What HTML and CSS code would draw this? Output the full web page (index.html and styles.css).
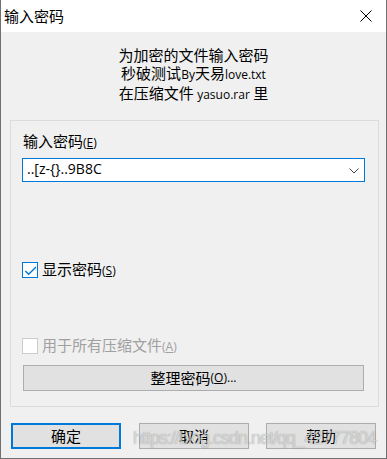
FILE: index.html
```html
<!DOCTYPE html>
<html lang="zh-CN">
<head>
<meta charset="utf-8">
<title>输入密码</title>
<link rel="stylesheet" href="styles.css">
</head>
<body>
<div class="win">
  <div class="titlebar">
    <span class="title">输入密码</span>
    <svg class="close" width="12" height="12" viewBox="0 0 12 12"><path d="M0.5 0.5 L11.5 11.5 M11.5 0.5 L0.5 11.5" stroke="#000" stroke-width="1" fill="none"/></svg>
  </div>
  <div class="body">
    <div class="msg">
      <div>为加密的文件输入密码</div>
      <div>秒破测试<span class="lat">By</span>天易<span class="lat">love.txt</span></div>
      <div>在压缩文件 <span class="lat">yasuo.rar</span> 里</div>
    </div>
    <div class="group">
      <div class="label">输入密码<span class="lat">(<u>E</u>)</span></div>
      <div class="combo">
        <span class="combo-text">..[z-{}..9B8C</span>
        <svg class="chev" width="10" height="6" viewBox="0 0 10 6"><path d="M0.5 0.5 L5 5 L9.5 0.5" stroke="#444" stroke-width="1" fill="none"/></svg>
      </div>
      <div class="check show">
        <span class="box checked"><svg width="14" height="14" viewBox="0 0 14 14"><path d="M2.3 8 L5.7 11.3 L13 4" stroke="#0078d7" stroke-width="1.4" fill="none"/></svg></span>
        <span>显示密码<span class="lat">(<u>S</u>)</span></span>
      </div>
      <div class="check disabled">
        <span class="box"></span>
        <span>用于所有压缩文件<span class="lat">(<u>A</u>)</span></span>
      </div>
      <div class="btn wide">整理密码<span class="lat">(<u>O</u>)...</span></div>
    </div>
    <div class="buttons">
      <div class="btn default">确定</div>
      <div class="btn b2">取消</div>
      <div class="btn b3">帮助</div>
    </div>
  </div>
  <div class="watermark">https://blog.csdn.net/qq_42777804</div>
</div>
</body>
</html>
```
FILE: styles.css
```css
html, body {
  margin: 0;
  padding: 0;
  background: #f0f0f0;
}
body {
  font-family: "Noto Sans CJK SC", "Noto Sans", sans-serif;
  font-size: 15px;
  line-height: 18px;
  color: #000;
}
.win {
  position: relative;
  width: 387px;
  height: 459px;
  box-sizing: border-box;
  border-left: 1px solid #707070;
  border-right: 1px solid #707070;
  border-bottom: 1px solid #707070;
  display: flex;
  flex-direction: column;
  overflow: hidden;
}
.titlebar {
  height: 32px;
  background: #fff;
  display: flex;
  align-items: center;
  padding-left: 3px;
  flex: none;
}
.title {
  line-height: 18px;
}
.close {
  margin-left: auto;
  margin-right: 14px;
}
.body {
  flex: 1;
  background: #f0f0f0;
  display: flex;
  flex-direction: column;
  padding-top: 14px;
}
.lat {
  font-family: "Open Sans", "Noto Sans", sans-serif;
  font-size: 12px;
}
.msg {
  text-align: center;
}
.group {
  margin-top: 16px;
  margin-left: 9px;
  width: 369px;
  height: 287px;
  box-sizing: border-box;
  border: 1px solid #dcdcdc;
  padding: 11px 0 0 11px;
  display: flex;
  flex-direction: column;
}
.label {
  margin-left: 1px;
}
.combo {
  margin-top: 6px;
  width: 343px;
  height: 24px;
  box-sizing: border-box;
  border: 1px solid #0078d7;
  background: #fff;
  display: flex;
  align-items: flex-start;
}
.combo-text {
  font-family: "Open Sans", "Noto Sans", sans-serif;
  font-size: 14px;
  line-height: 20px;
  padding-left: 4px;
}
.chev {
  margin-left: auto;
  margin-right: 5px;
  margin-top: 9px;
}
.check {
  display: flex;
  align-items: center;
  height: 18px;
  gap: 4px;
}
.check.show {
  margin-top: 79px;
}
.check.disabled {
  margin-top: 58px;
  color: #a0a0a0;
}
.box {
  width: 16px;
  height: 16px;
  box-sizing: border-box;
  border: 1px solid #cccccc;
  background: #fff;
  display: flex;
  align-items: center;
  justify-content: center;
}
.box.checked {
  border-color: #0078d7;
}
.btn {
  height: 26px;
  box-sizing: border-box;
  border: 1px solid #adadad;
  background: #e1e1e1;
  display: flex;
  align-items: center;
  justify-content: center;
}
.btn.wide {
  margin-top: 10px;
  margin-left: 1px;
  width: 341px;
}
.buttons {
  display: flex;
  margin-top: 16px;
  margin-left: 10px;
}
.buttons .btn {
  width: 110px;
}
.btn.default {
  border: 2px solid #0078d7;
}
.btn.b2 {
  margin-left: 18px;
}
.btn.b3 {
  margin-left: 17px;
}
.watermark {
  position: absolute;
  left: 132px;
  top: 429px;
  font-family: "Liberation Sans", Arial, sans-serif;
  font-size: 18px;
  line-height: 18px;
  letter-spacing: -1px;
  color: rgba(255, 255, 255, 0.65);
  text-shadow: 0 0 1px rgba(0, 0, 0, 0.45);
  white-space: nowrap;
  pointer-events: none;
}
```
